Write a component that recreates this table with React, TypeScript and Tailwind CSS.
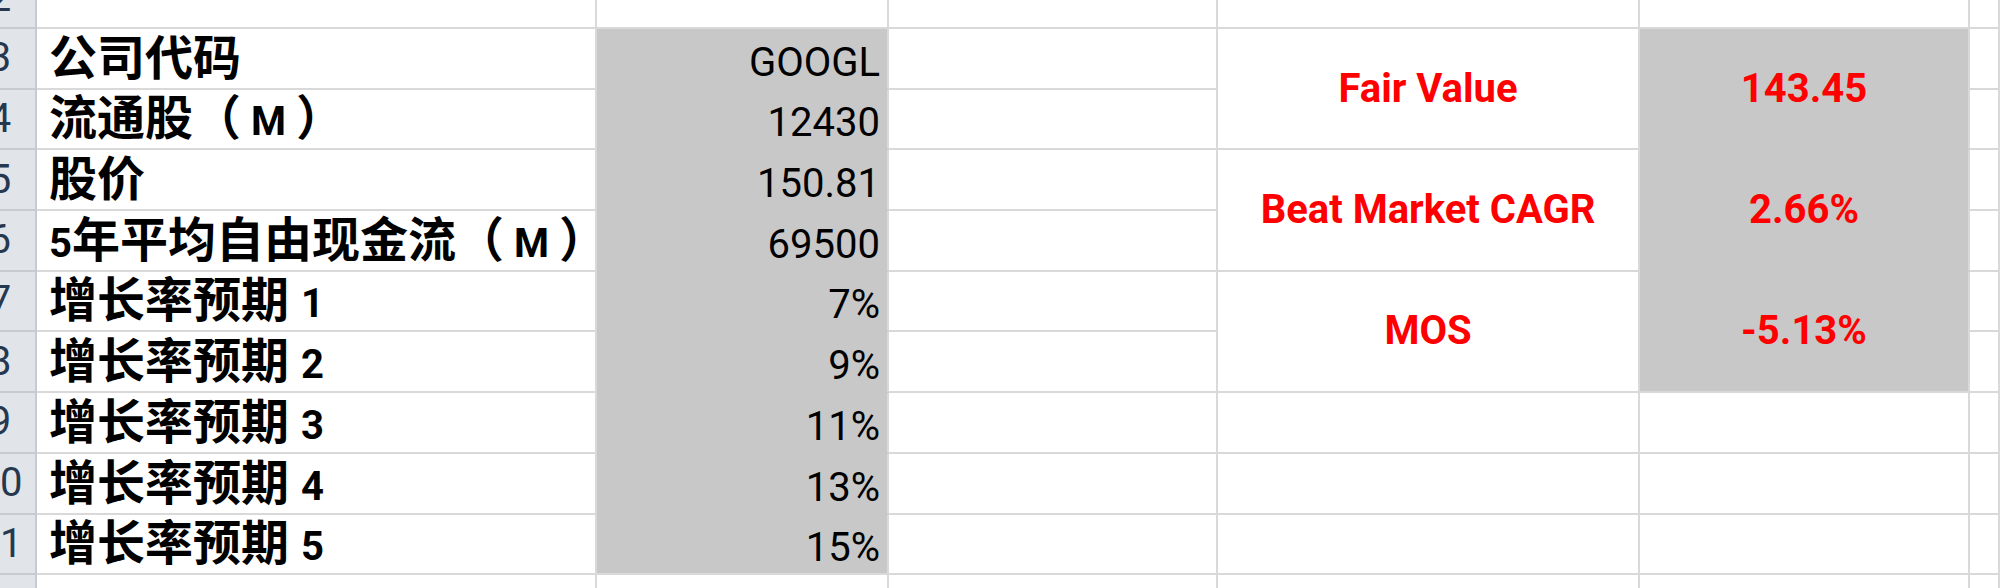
import type { ReactNode } from "react";

const GRID = "border-[#d9d9d9]";
const FILL = "bg-[#c8c8c8]";

// latin bits inside the bold chinese labels
const L = ({ children }: { children: ReactNode }) => (
  <span className="ml-[12px] text-[40px] font-['Roboto',sans-serif]">{children}</span>
);

const M = () => <span className="mx-[10px] text-[40px] font-['Roboto',sans-serif]">M</span>;

const labels: ReactNode[] = [
  <>公司代码</>,
  <>流通股（<M />）</>,
  <>股价</>,
  <>
    <span className="text-[40px] font-['Roboto',sans-serif]">5</span>年平均自由现金流（<M />）
  </>,
  <>增长率预期<L>1</L></>,
  <>增长率预期<L>2</L></>,
  <>增长率预期<L>3</L></>,
  <>增长率预期<L>4</L></>,
  <>增长率预期<L>5</L></>,
];

const values = ["GOOGL", "12430", "150.81", "69500", "7%", "9%", "11%", "13%", "15%"];

const results = [
  { name: "Fair Value", value: "143.45" },
  { name: "Beat Market CAGR", value: "2.66%" },
  { name: "MOS", value: "-5.13%" },
];

function RowHead({ n }: { n: number }) {
  return (
    <div className="flex items-center overflow-hidden border-r-2 border-b-2 border-[#c6cbd2] bg-[#e1e5ea]">
      <span className="-ml-[37px] w-[74px] shrink-0 text-center text-[40px] leading-none text-[#26384f] font-['Roboto',sans-serif]">
        {n}
      </span>
    </div>
  );
}

function Cell({ className = "", children }: { className?: string; children?: ReactNode }) {
  return <div className={`border-r-2 border-b-2 ${GRID} ${className}`}>{children}</div>;
}

export default function App() {
  const rows: ReactNode[] = [];

  // row 2, mostly scrolled off the top
  rows.push(<RowHead key="h2" n={2} />);
  for (let c = 0; c < 6; c++) rows.push(<Cell key={`r2-${c}`} />);

  for (let i = 0; i < 9; i++) {
    const r = i + 3;
    rows.push(<RowHead key={`h${r}`} n={r} />);
    rows.push(
      <Cell
        key={`a${r}`}
        className="flex items-end pb-[5px] pl-[12px] text-[48px] leading-none font-bold text-black font-['Roboto','Noto_Sans_CJK_SC',sans-serif]"
      >
        <span className="whitespace-nowrap">{labels[i]}</span>
      </Cell>
    );
    rows.push(
      <div
        key={`b${r}`}
        className={`flex items-end justify-end border-r-2 border-b-2 pb-[5px] pr-[7px] text-[40px] leading-none text-black font-['Roboto',sans-serif] ${FILL} ${
          i === 8 ? GRID : "border-b-[#c8c8c8] border-r-[#d9d9d9]"
        }`}
      >
        {values[i]}
      </div>
    );
    rows.push(<Cell key={`c${r}`} />);

    if (i < 6) {
      if (i % 2 === 0) {
        const res = results[i / 2];
        rows.push(
          <Cell
            key={`d${r}`}
            className="row-span-2 flex items-center justify-center text-[40px] leading-none font-bold text-[#ff0000] font-['Roboto',sans-serif]"
          >
            {res.name}
          </Cell>
        );
        rows.push(
          <div
            key={`e${r}`}
            className={`row-span-2 flex items-center justify-center border-r-2 border-b-2 text-[40px] leading-none font-bold text-[#ff0000] font-['Roboto',sans-serif] ${FILL} ${
              i === 4 ? GRID : "border-b-[#c8c8c8] border-r-[#d9d9d9]"
            }`}
          >
            {res.value}
          </div>
        );
      }
    } else {
      rows.push(<Cell key={`d${r}`} />);
      rows.push(<Cell key={`e${r}`} />);
    }
    rows.push(<Cell key={`f${r}`} />);
  }

  // row 12, cut at the bottom
  rows.push(<RowHead key="h12" n={12} />);
  for (let c = 0; c < 6; c++) rows.push(<Cell key={`r12-${c}`} />);

  return (
    <div className="h-[588px] w-[2000px] overflow-hidden bg-white">
      <div className="-mt-[31.7px] grid grid-cols-[37px_560px_292px_329px_422px_330px_30px] grid-rows-[repeat(11,60.7px)]">
        {rows}
      </div>
    </div>
  );
}
